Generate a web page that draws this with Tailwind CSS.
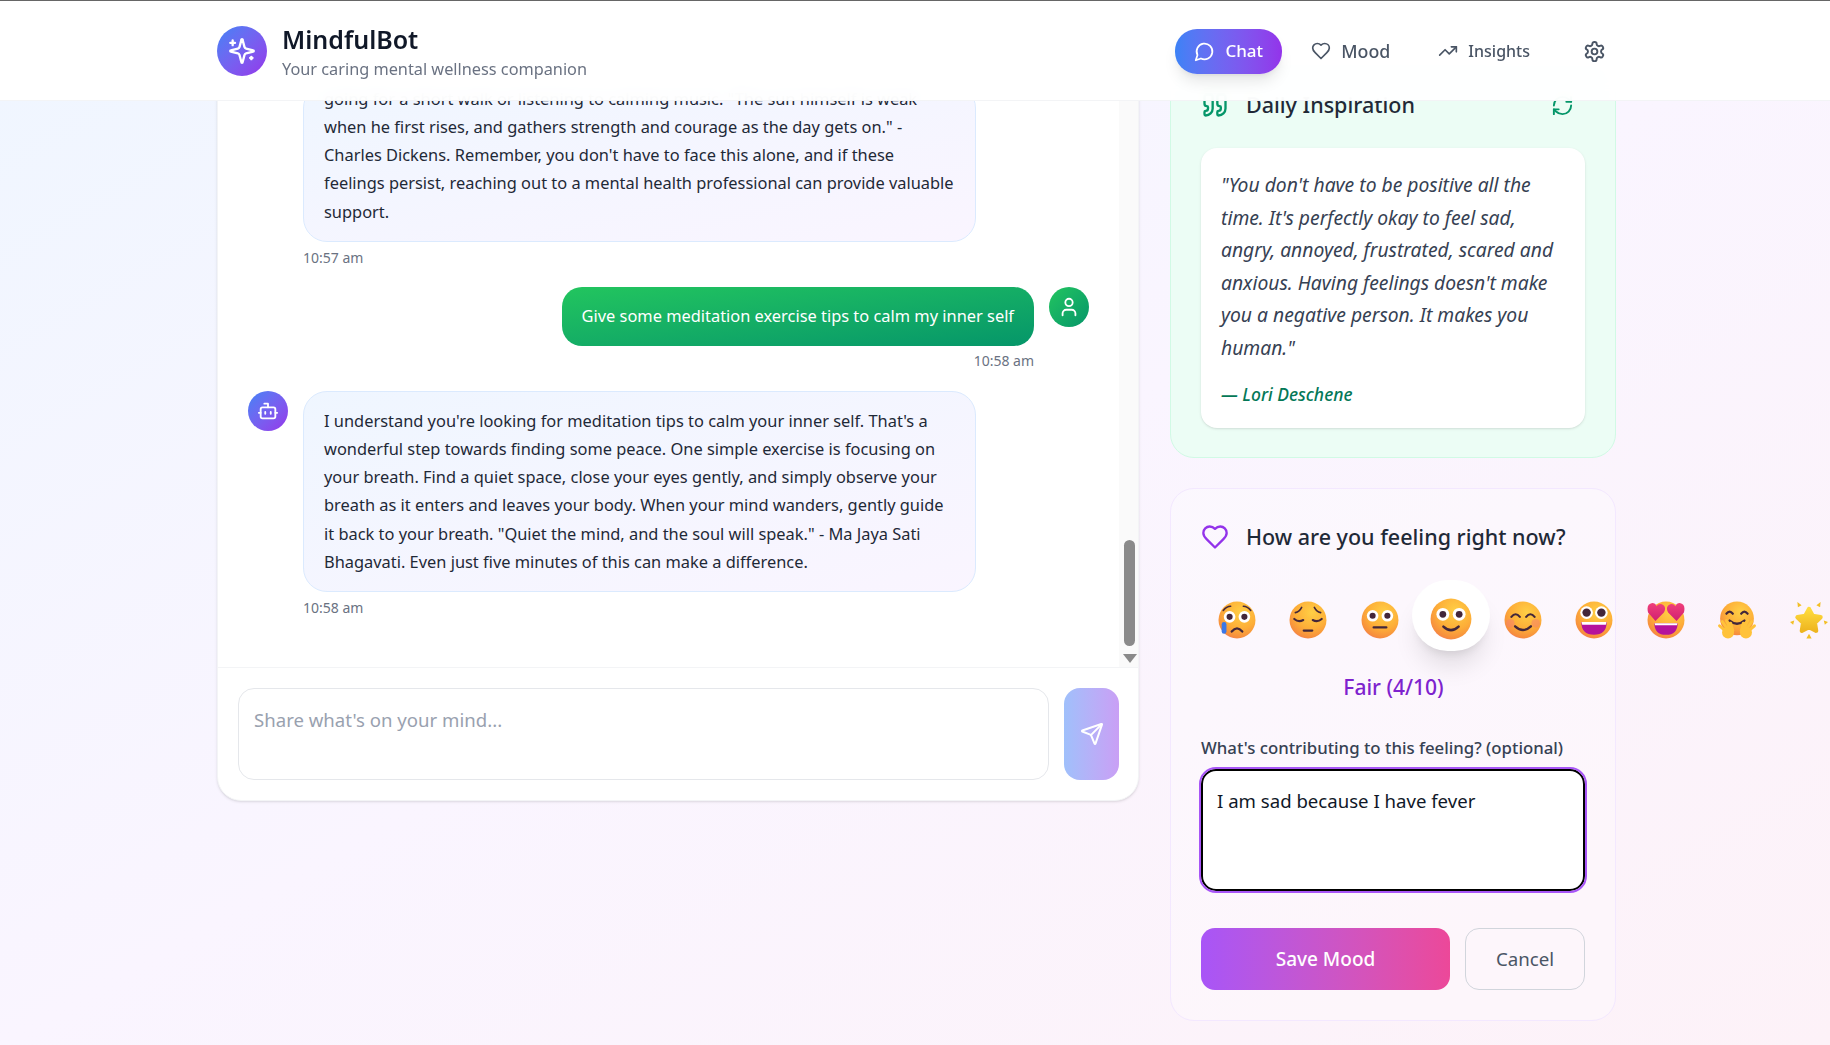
<!DOCTYPE html>
<html lang="en">
<head>
<meta charset="UTF-8" />
<title>MindfulBot</title>
<script src="https://cdn.jsdelivr.net/npm/@tailwindcss/browser@4"></script>
</head>
<body class="h-screen overflow-hidden bg-gradient-to-br from-[#eff6ff] via-[#faf5ff] to-[#fdf2f8] font-['Noto_Sans',sans-serif] text-[#1f2937]">

<!-- shared emoji gradients -->
<svg class="absolute w-0 h-0">
  <defs>
    <radialGradient id="face" cx="0.6" cy="0.3" r="0.8">
      <stop offset="0" stop-color="#ffcf45"/><stop offset="0.55" stop-color="#fdae38"/><stop offset="0.86" stop-color="#f68c3e"/><stop offset="1" stop-color="#ea6fa0"/>
    </radialGradient>
    <linearGradient id="star" x1="0" y1="0" x2="0" y2="1">
      <stop offset="0" stop-color="#ffdc3f"/><stop offset="1" stop-color="#eeb51f"/>
    </linearGradient>
    <linearGradient id="heart" x1="0" y1="0" x2="0" y2="1">
      <stop offset="0" stop-color="#f0407a"/><stop offset="1" stop-color="#d01f72"/>
    </linearGradient>
    <symbol id="eyes" viewBox="0 0 36 36">
      <circle cx="11" cy="14" r="5.500" fill="#fff"/><circle cx="25" cy="14" r="5.500" fill="#fff"/>
      <circle cx="11" cy="14" r="2.900" fill="#43273a"/><circle cx="25" cy="14" r="2.900" fill="#43273a"/>
    </symbol>
    <symbol id="hand" viewBox="0 0 36 36">
      <g stroke="#ffc23a" stroke-width="2.800" stroke-linecap="round" fill="none">
        <path d="M9 30 1.500 23.500M10 28 4 19.500M12 27 8 18.500M14 28l-2-7"/>
      </g>
      <circle cx="9.500" cy="29.800" r="5.700" fill="#ffc23a"/>
    </symbol>
  </defs>
</svg>

<!-- Header -->
<header class="relative z-10 h-[101px] border-t border-b border-t-[#666] border-b-gray-100 bg-white/95 backdrop-blur">
  <div class="w-[1398px] ml-[217px] h-[99px] flex items-center justify-between">
    <div class="flex items-center gap-[15px]">
      <div class="w-[50px] h-[50px] rounded-full bg-gradient-to-br from-[#3b82f6] to-[#9333ea] flex items-center justify-center">
        <svg class="w-7 h-7 text-white -scale-x-100" viewBox="0 0 24 24" fill="none" stroke="currentColor" stroke-width="2" stroke-linecap="round" stroke-linejoin="round"><path d="M9.900 15.500A2 2 0 0 0 8.500 14.100l-6.100-1.600a.500.500 0 0 1 0-1l6.100-1.600a2 2 0 0 0 1.400-1.400l1.600-6.100a.500.500 0 0 1 1 0l1.600 6.100a2 2 0 0 0 1.400 1.400l6.100 1.600a.500.500 0 0 1 0 1l-6.100 1.600a2 2 0 0 0-1.400 1.400l-1.600 6.100a.500.500 0 0 1-1 0z"/><path d="M20 3v4M22 5h-4M4 17v2M5 18H3"/></svg>
      </div>
      <div class="pt-[4px]">
        <div class="text-[25px] leading-[31px] font-semibold text-gray-900">MindfulBot</div>
        <div class="mt-[2px] text-[16.300px] leading-[24px] text-gray-500">Your caring mental wellness companion</div>
      </div>
    </div>
    <nav class="flex items-center mr-[9px] pt-[1px]">
      <div class="w-[107px] h-[45px] rounded-[22px] bg-gradient-to-r from-[#3b82f6] to-[#9333ea] shadow-lg flex items-center justify-center gap-[10px] text-white font-medium text-[17px]">
        <svg class="w-[21px] h-[21px]" viewBox="0 0 24 24" fill="none" stroke="currentColor" stroke-width="2" stroke-linecap="round" stroke-linejoin="round"><path d="M7.900 20A9 9 0 1 0 4 16.100L2 22Z"/></svg>Chat
      </div>
      <div class="ml-[29px] flex items-center gap-[10px] text-gray-600 font-medium text-[17.800px]">
        <svg class="w-5 h-5" viewBox="0 0 24 24" fill="none" stroke="currentColor" stroke-width="2" stroke-linecap="round" stroke-linejoin="round"><path d="M19 14c1.500-1.500 3-3.200 3-5.500A5.500 5.500 0 0 0 16.500 3c-1.800 0-3 .500-4.500 2-1.500-1.500-2.700-2-4.500-2A5.500 5.500 0 0 0 2 8.500c0 2.300 1.500 4 3 5.500l7 7Z"/></svg>Mood
      </div>
      <div class="ml-[48px] flex items-center gap-[10px] text-gray-600 font-medium text-[16px]">
        <svg class="w-5 h-5" viewBox="0 0 24 24" fill="none" stroke="currentColor" stroke-width="2" stroke-linecap="round" stroke-linejoin="round"><path d="M22 7 13.500 15.500l-5-5L2 17"/><path d="M16 7h6v6"/></svg>Insights
      </div>
      <svg class="ml-[53px] w-[23px] h-[23px] text-gray-600" viewBox="0 0 24 24" fill="none" stroke="currentColor" stroke-width="2" stroke-linecap="round" stroke-linejoin="round"><path d="M12.220 2h-.440a2 2 0 0 0-2 2v.180a2 2 0 0 1-1 1.730l-.430.250a2 2 0 0 1-2 0l-.150-.080a2 2 0 0 0-2.730.730l-.220.380a2 2 0 0 0 .730 2.730l.150.100a2 2 0 0 1 1 1.720v.510a2 2 0 0 1-1 1.740l-.150.090a2 2 0 0 0-.730 2.730l.220.380a2 2 0 0 0 2.730.730l.150-.080a2 2 0 0 1 2 0l.430.250a2 2 0 0 1 1 1.730V20a2 2 0 0 0 2 2h.440a2 2 0 0 0 2-2v-.180a2 2 0 0 1 1-1.730l.430-.250a2 2 0 0 1 2 0l.150.080a2 2 0 0 0 2.730-.730l.220-.390a2 2 0 0 0-.730-2.730l-.150-.080a2 2 0 0 1-1-1.740v-.500a2 2 0 0 1 1-1.740l.150-.090a2 2 0 0 0 .730-2.730l-.220-.380a2 2 0 0 0-2.730-.730l-.150.080a2 2 0 0 1-2 0l-.430-.250a2 2 0 0 1-1-1.730V4a2 2 0 0 0-2-2z"/><circle cx="12" cy="12" r="3"/></svg>
    </nav>
  </div>
</header>

<!-- Main, scrolled so the tops of both columns sit under the header -->
<main class="w-[1399px] ml-[217px] -mt-[60px] flex items-start gap-[31px]">

  <!-- Chat column -->
  <section class="w-[922px] h-[760px] bg-white rounded-[24px] shadow-sm border border-gray-100 flex flex-col overflow-hidden">
    <div class="h-[625px] flex overflow-hidden">
      <div class="flex-1 pl-[30px] flex flex-col justify-end pb-[49px] text-[16.400px] leading-[28.200px] text-[#1f2937] overflow-hidden">
        <!-- bot message 1 -->
        <div class="shrink-0 ml-[55px] w-[673px] rounded-[24px] bg-gradient-to-br from-[#eff6ff] to-[#faf5ff] border border-[#dbeafe] px-5 pb-[15px] whitespace-nowrap">
          going for a short walk or listening to calming music. "The sun himself is weak<br>
          when he first rises, and gathers strength and courage as the day gets on." -<br>
          Charles Dickens. Remember, you don't have to face this alone, and if these<br>
          feelings persist, reaching out to a mental health professional can provide valuable<br>
          support.
        </div>
        <div class="ml-[55px] mt-[6px] text-[14px] leading-[20px] text-gray-500">10:57 am</div>

        <!-- user message -->
        <div class="mt-[19px] flex justify-end items-start gap-[15px] mr-[30px]">
          <div class="flex flex-col items-end">
            <div class="h-[59px] px-5 flex items-center rounded-[20px] bg-gradient-to-br from-[#22c55e] to-[#059669] text-white whitespace-nowrap">Give some meditation exercise tips to calm my inner self</div>
            <div class="mt-[5px] text-[14px] leading-[20px] text-gray-500">10:58 am</div>
          </div>
          <div class="w-10 h-10 rounded-full bg-gradient-to-br from-[#22c55e] to-[#059669] flex items-center justify-center">
            <svg class="w-[22px] h-[22px] text-white" viewBox="0 0 24 24" fill="none" stroke="currentColor" stroke-width="2" stroke-linecap="round" stroke-linejoin="round"><path d="M19 21v-2a4 4 0 0 0-4-4H9a4 4 0 0 0-4 4v2"/><circle cx="12" cy="7" r="4"/></svg>
          </div>
        </div>

        <!-- bot message 2 -->
        <div class="mt-[20px] flex items-start gap-[15px]">
          <div class="w-10 h-10 rounded-full bg-gradient-to-br from-[#3b82f6] to-[#9333ea] flex items-center justify-center">
            <svg class="w-[22px] h-[22px] text-white" viewBox="0 0 24 24" fill="none" stroke="currentColor" stroke-width="2" stroke-linecap="round" stroke-linejoin="round"><path d="M12 8V4H8"/><rect x="4" y="8" width="16" height="12" rx="2"/><path d="M2 14h2M20 14h2M15 13v2M9 13v2"/></svg>
          </div>
          <div>
            <div class="w-[673px] rounded-[24px] bg-gradient-to-br from-[#eff6ff] to-[#faf5ff] border border-[#dbeafe] px-5 py-[15px] whitespace-nowrap">
              I understand you're looking for meditation tips to calm your inner self. That's a<br>
              wonderful step towards finding some peace. One simple exercise is focusing on<br>
              your breath. Find a quiet space, close your eyes gently, and simply observe your<br>
              breath as it enters and leaves your body. When your mind wanders, gently guide<br>
              it back to your breath. "Quiet the mind, and the soul will speak." - Ma Jaya Sati<br>
              Bhagavati. Even just five minutes of this can make a difference.
            </div>
            <div class="mt-[6px] text-[14px] leading-[20px] text-gray-500">10:58 am</div>
          </div>
        </div>
      </div>
      <!-- scrollbar -->
      <div class="w-[19px] pl-[2px] bg-[#fafafa] flex flex-col items-center justify-end pb-[4px]">
        <div class="w-[11px] h-[106px] rounded-full bg-[#8a8a8a]"></div>
        <div class="mt-[8px] w-0 h-0 border-x-[7px] border-x-transparent border-t-[9px] border-t-[#8a8a8a]"></div>
      </div>
    </div>
    <div class="flex-1 border-t border-gray-100 pl-[20px] pr-[19px] pt-[20px] flex gap-[15px]">
      <div class="w-[811px] h-[92px] rounded-[16px] border border-gray-200 bg-white px-[15px] pt-[18px] text-[18.600px] leading-[26px] text-gray-400">Share what's on your mind...</div>
      <div class="w-[55px] h-[92px] rounded-[16px] bg-gradient-to-r from-[#9fc0fb] to-[#c99ff5] flex items-center justify-center">
        <svg class="w-6 h-6 text-white" viewBox="0 0 24 24" fill="none" stroke="currentColor" stroke-width="2" stroke-linecap="round" stroke-linejoin="round"><path d="M14.536 21.686a.500.500 0 0 0 .937-.024l6.500-19a.496.496 0 0 0-.635-.635l-19 6.500a.500.500 0 0 0-.024.937l7.930 3.180a2 2 0 0 1 1.112 1.110z"/><path d="m21.854 2.147-10.940 10.939"/></svg>
      </div>
    </div>
  </section>

  <!-- Right column -->
  <aside class="mt-[18px] w-[446px] flex flex-col gap-[30px]">
    <!-- Daily inspiration -->
    <div class="h-[399px] rounded-[24px] border border-[#d1fae5] bg-[#ecfdf5] px-[30px] pt-[29px]">
      <div class="flex items-center justify-between pr-[11px] h-[32px]">
        <div class="flex items-center gap-[17px]">
          <svg class="w-7 h-7 text-[#059669]" viewBox="0 0 24 24" fill="none" stroke="currentColor" stroke-width="2" stroke-linecap="round" stroke-linejoin="round"><path d="M16 3a2 2 0 0 0-2 2v6a2 2 0 0 0 2 2 1 1 0 0 1 1 1v1a2 2 0 0 1-2 2 1 1 0 0 0-1 1v2a1 1 0 0 0 1 1 6 6 0 0 0 6-6V5a2 2 0 0 0-2-2z"/><path d="M5 3a2 2 0 0 0-2 2v6a2 2 0 0 0 2 2 1 1 0 0 1 1 1v1a2 2 0 0 1-2 2 1 1 0 0 0-1 1v2a1 1 0 0 0 1 1 6 6 0 0 0 6-6V5a2 2 0 0 0-2-2z"/></svg>
          <span class="text-[21.500px] font-medium text-[#1f2937]">Daily Inspiration</span>
        </div>
        <svg class="w-[23px] h-[23px] text-[#059669]" viewBox="0 0 24 24" fill="none" stroke="currentColor" stroke-width="2" stroke-linecap="round" stroke-linejoin="round"><path d="M3 12a9 9 0 0 1 9-9 9.750 9.750 0 0 1 6.740 2.740L21 8"/><path d="M21 3v5h-5"/><path d="M21 12a9 9 0 0 1-9 9 9.750 9.750 0 0 1-6.740-2.740L3 16"/><path d="M8 16H3v5"/></svg>
      </div>
      <div class="mt-[27px] h-[280px] rounded-[16px] bg-white px-5 pt-[21px] shadow-sm">
        <p class="italic text-[19.300px] leading-[32.500px] text-gray-700 whitespace-nowrap">"You don't have to be positive all the<br>time. It's perfectly okay to feel sad,<br>angry, annoyed, frustrated, scared and<br>anxious. Having feelings doesn't make<br>you a negative person. It makes you<br>human."</p>
        <p class="mt-[17px] italic font-medium text-[17.500px] text-[#047857]">— Lori Deschene</p>
      </div>
    </div>

    <!-- Mood tracker -->
    <div class="h-[533px] rounded-[24px] border border-[#f3e8ff] bg-white/30 px-[30px] pt-[32px]">
      <div class="flex items-center gap-[17px]">
        <svg class="w-[28px] h-[28px] text-[#9333ea]" viewBox="0 0 24 24" fill="none" stroke="currentColor" stroke-width="2" stroke-linecap="round" stroke-linejoin="round"><path d="M19 14c1.500-1.500 3-3.200 3-5.500A5.500 5.500 0 0 0 16.500 3c-1.800 0-3 .500-4.500 2-1.500-1.500-2.700-2-4.500-2A5.500 5.500 0 0 0 2 8.500c0 2.300 1.500 4 3 5.500l7 7Z"/></svg>
        <span class="text-[21.500px] font-medium text-[#1f2937] whitespace-nowrap">How are you feeling right now?</span>
      </div>

      <div class="mt-[26px] w-[660px] h-[72px] flex items-center">
        <!-- 1 crying -->
        <div class="w-[71.500px] flex justify-center"><svg class="w-[38px] h-[38px] translate-y-[5px]" viewBox="0 0 36 36"><circle cx="18" cy="18" r="17.500" fill="url(#face)"/><use href="#eyes" width="36" height="36" y="1"/><path d="M5 9q3-4 7-4M24 5q4 0 7 4" stroke="#43273a" stroke-width="1.500" fill="none" stroke-linecap="round"/><path d="M13 29q5-6 10 0" stroke="#43273a" stroke-width="2.200" fill="none" stroke-linecap="round"/><rect x="3.500" y="20" width="4.500" height="11" rx="2.200" fill="#3b78e7"/></svg></div>
        <!-- 2 pensive -->
        <div class="w-[71.500px] flex justify-center"><svg class="w-[38px] h-[38px] translate-y-[5px]" viewBox="0 0 36 36"><circle cx="18" cy="18" r="17.500" fill="url(#face)"/><path d="M5 17q4 3.500 8.500 1M22.500 18q4.500 2.500 8.500-1" stroke="#43273a" stroke-width="2" fill="none" stroke-linecap="round"/><path d="M6 11q4-1 6-5M24 6q2 4 6 5" stroke="#43273a" stroke-width="1.500" fill="none" stroke-linecap="round"/><path d="M14 28h8" stroke="#43273a" stroke-width="2.200" stroke-linecap="round"/></svg></div>
        <!-- 3 neutral -->
        <div class="w-[71.500px] flex justify-center"><svg class="w-[38px] h-[38px] translate-y-[5px]" viewBox="0 0 36 36"><circle cx="18" cy="18" r="17.500" fill="url(#face)"/><use href="#eyes" width="36" height="36"/><path d="M12 25h12" stroke="#43273a" stroke-width="2.200" stroke-linecap="round"/></svg></div>
        <!-- 4 selected -->
        <div class="w-[71.500px] flex justify-center"><div class="shrink-0 w-[78px] h-[71px] rounded-full bg-white shadow-xl flex items-center justify-center"><svg class="w-[42px] h-[42px] translate-y-[4px]" viewBox="0 0 36 36"><circle cx="18" cy="18" r="17.500" fill="url(#face)"/><use href="#eyes" width="36" height="36"/><path d="M11.500 24.500q6.500 6 13 0" stroke="#43273a" stroke-width="2.200" fill="none" stroke-linecap="round"/></svg></div></div>
        <!-- 5 smiling -->
        <div class="w-[71.500px] flex justify-center"><svg class="w-[38px] h-[38px] translate-y-[5px]" viewBox="0 0 36 36"><circle cx="18" cy="18" r="17.500" fill="url(#face)"/><circle cx="6" cy="21" r="4" fill="#f6806f" opacity=".5"/><circle cx="30" cy="21" r="4" fill="#f6806f" opacity=".5"/><path d="M7 15q4-5 8 0M21 15q4-5 8 0" stroke="#43273a" stroke-width="2" fill="none" stroke-linecap="round"/><path d="M10.500 24q7.500 7 15 0" stroke="#43273a" stroke-width="2.200" fill="none" stroke-linecap="round"/></svg></div>
        <!-- 6 grinning -->
        <div class="w-[71.500px] flex justify-center"><svg class="w-[38px] h-[38px] translate-y-[5px]" viewBox="0 0 36 36"><circle cx="18" cy="18" r="17.500" fill="url(#face)"/><circle cx="11" cy="11" r="6" fill="#fff"/><circle cx="25" cy="11" r="6" fill="#fff"/><circle cx="11" cy="11" r="4" fill="#43273a"/><circle cx="25" cy="11" r="4" fill="#43273a"/><path d="M6 20h24q0 12-12 12T6 20Z" fill="#b5129c"/><path d="M6.200 20h23.600l-.600 2.500H6.800Z" fill="#fff"/></svg></div>
        <!-- 7 heart eyes -->
        <div class="w-[71.500px] flex justify-center"><svg class="w-[38px] h-[38px] translate-y-[5px]" viewBox="0 0 36 36"><circle cx="18" cy="18" r="17.500" fill="url(#face)"/><path d="M8 19 1 11q-2-8 4-9 3 0 4 3 2-3 5-2 5 2 2 8Z" fill="url(#heart)"/><path d="M28 19l7-8q2-8-4-9-3 0-4 3-2-3-5-2-5 2-2 8Z" fill="url(#heart)"/><path d="M7 21h22q0 11-11 11T7 21Z" fill="#b5129c"/><path d="M7.200 21h21.600l-.500 2H7.700Z" fill="#fff"/></svg></div>
        <!-- 8 hugging -->
        <div class="w-[71.500px] flex justify-center"><svg class="w-[38px] h-[38px] translate-y-[5px]" viewBox="0 0 36 36"><circle cx="18" cy="16.500" r="16" fill="url(#face)"/><path d="M8 12q3-4 6 0M22 12q3-4 6 0" stroke="#43273a" stroke-width="2.200" fill="none" stroke-linecap="round"/><path d="M11 18.500q7 6 14 0" stroke="#43273a" stroke-width="2.200" fill="none" stroke-linecap="round"/><use href="#hand" width="36" height="36"/><use href="#hand" width="36" height="36" transform="matrix(-1 0 0 1 36 0)"/></svg></div>
        <!-- 9 star -->
        <div class="w-[71.500px] flex justify-center"><svg class="w-[38px] h-[38px] translate-y-[5px]" viewBox="0 0 36 36"><path d="M18 7.500l3.500 6.500 7.500 1.300-5.400 5.400 1.200 7.500-6.800-3.500-6.800 3.500 1.200-7.500L7 15.300l7.500-1.300Z" fill="url(#star)" stroke="url(#star)" stroke-width="4" stroke-linejoin="round"/><path d="M7 1l4 3-3.500 2ZM29 1l-4 3 3.500 2ZM0 20l4-1.500-1 4ZM36 20l-4-1.500 1 4ZM15.500 35.500 18 31l2.500 4.500Z" fill="#f2bf25"/></svg></div>
      </div>

      <div class="mt-[22px] w-[385px] text-center text-[21px] font-medium leading-[28px] text-[#7e22ce]">Fair (4/10)</div>

      <label class="block mt-[35px] text-[16.800px] leading-[24px] font-medium text-gray-700 whitespace-nowrap">What's contributing to this feeling? (optional)</label>
      <div class="mt-[9px] w-[384px] h-[122px] rounded-[15px] border-2 border-black bg-white outline-2 outline-[#a855f7] px-[14px] pt-[17px] text-[18.600px] leading-[26px] text-gray-900">I am sad because I have fever</div>

      <div class="mt-[37px] flex gap-[15px] w-[384px]">
        <div class="w-[249px] h-[62px] rounded-[14px] bg-gradient-to-r from-[#a855f7] to-[#ec4899] flex items-center justify-center text-white text-[19px] font-medium">Save Mood</div>
        <div class="w-[120px] h-[62px] rounded-[14px] border border-gray-300 flex items-center justify-center text-gray-600 text-[18.700px]">Cancel</div>
      </div>
    </div>
  </aside>
</main>
</body>
</html>
